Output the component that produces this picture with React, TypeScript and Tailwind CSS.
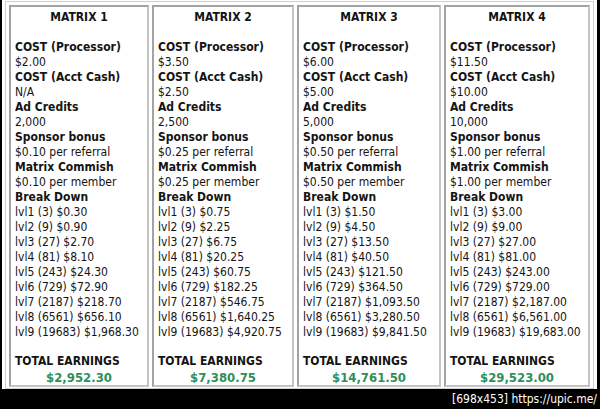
const levels = ["lvl1 (3)", "lvl2 (9)", "lvl3 (27)", "lvl4 (81)", "lvl5 (243)", "lvl6 (729)", "lvl7 (2187)", "lvl8 (6561)", "lvl9 (19683)"];

type Matrix = {
  name: string;
  proc: string;
  cash: string;
  credits: string;
  sponsor: string;
  commish: string;
  breakdown: string[];
  total: string;
  width: string;
};

const matrices: Matrix[] = [
  {
    name: "MATRIX 1",
    proc: "$2.00",
    cash: "N/A",
    credits: "2,000",
    sponsor: "$0.10",
    commish: "$0.10",
    breakdown: ["$0.30", "$0.90", "$2.70", "$8.10", "$24.30", "$72.90", "$218.70", "$656.10", "$1,968.30"],
    total: "$2,952.30",
    width: "w-[140px]",
  },
  {
    name: "MATRIX 2",
    proc: "$3.50",
    cash: "$2.50",
    credits: "2,500",
    sponsor: "$0.25",
    commish: "$0.25",
    breakdown: ["$0.75", "$2.25", "$6.75", "$20.25", "$60.75", "$182.25", "$546.75", "$1,640.25", "$4,920.75"],
    total: "$7,380.75",
    width: "w-[142px]",
  },
  {
    name: "MATRIX 3",
    proc: "$6.00",
    cash: "$5.00",
    credits: "5,000",
    sponsor: "$0.50",
    commish: "$0.50",
    breakdown: ["$1.50", "$4.50", "$13.50", "$40.50", "$121.50", "$364.50", "$1,093.50", "$3,280.50", "$9,841.50"],
    total: "$14,761.50",
    width: "w-[144px]",
  },
  {
    name: "MATRIX 4",
    proc: "$11.50",
    cash: "$10.00",
    credits: "10,000",
    sponsor: "$1.00",
    commish: "$1.00",
    breakdown: ["$3.00", "$9.00", "$27.00", "$81.00", "$243.00", "$729.00", "$2,187.00", "$6,561.00", "$19,683.00"],
    total: "$29,523.00",
    width: "w-[146px]",
  },
];

function MatrixCell({ m }: { m: Matrix }) {
  return (
    <div className={`${m.width} h-full border-2 border-[#a3a3a3] border-r-[#c4c4c4] border-b-[#c4c4c4] pt-[3px] pl-[4px] text-[12px] leading-[15px] text-[#141414]`}>
      <div className="text-center font-bold pr-[4px]">{m.name}</div>
      <div className="h-[15px]" />
      <div className="font-bold">COST (Processor)</div>
      <div>{m.proc}</div>
      <div className="font-bold">COST (Acct Cash)</div>
      <div>{m.cash}</div>
      <div className="font-bold">Ad Credits</div>
      <div>{m.credits}</div>
      <div className="font-bold">Sponsor bonus</div>
      <div>{m.sponsor} per referral</div>
      <div className="font-bold">Matrix Commish</div>
      <div>{m.commish} per member</div>
      <div className="font-bold">Break Down</div>
      {levels.map((l, i) => (
        <div key={l} className="whitespace-nowrap">
          {l} {m.breakdown[i]}
        </div>
      ))}
      <div className="h-[14px]" />
      <div className="font-bold">TOTAL EARNINGS</div>
      <div className="text-center font-bold text-[#2f8f58] text-[13px] mt-[1px] pr-[4px]">{m.total}</div>
    </div>
  );
}

export default function App() {
  return (
    <div
      className="w-[600px] h-[409px] bg-black overflow-hidden"
      style={{ fontFamily: "'DejaVu Sans Condensed', 'DejaVu Sans', sans-serif" }}
    >
      <div className="ml-[2px] w-[595px] h-[389px] bg-white pt-[1px] pl-[3px]">
        <div className="w-[589px] h-[388px] border border-[#cfcfcf] pt-[3px] px-[3px] pb-[1px] flex gap-[3px]">
          {matrices.map((m) => (
            <MatrixCell key={m.name} m={m} />
          ))}
        </div>
      </div>
      <div className="h-[20px] flex items-center justify-end pr-[3px] text-white text-[12px]">
        [698x453] https://upic.me/
      </div>
    </div>
  );
}
